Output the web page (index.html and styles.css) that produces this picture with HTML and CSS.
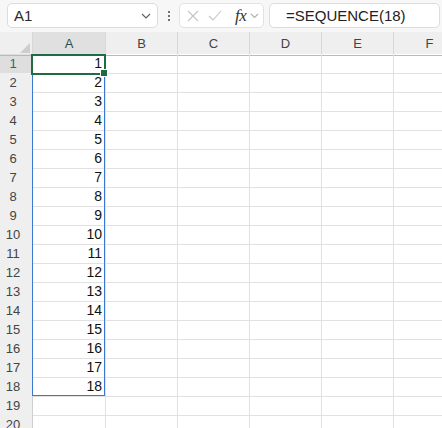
FILE: index.html
```html
<!DOCTYPE html>
<html>
<head>
<meta charset="utf-8">
<link rel="stylesheet" href="styles.css">
</head>
<body>
<div class="toolbar">
  <div class="namebox">
    <span class="nb-text">A1</span>
    <svg class="chev" width="10" height="6" viewBox="0 0 10 6"><polyline points="1,1 5,5 9,1" fill="none" stroke="#6a5a6a" stroke-width="1.2"/></svg>
  </div>
  <div class="dots"><i></i><i></i><i></i></div>
  <div class="fxbox">
    <svg class="ico" width="12" height="12" viewBox="0 0 12 12"><path d="M1 1 L11 11 M11 1 L1 11" stroke="#c4c4c4" stroke-width="1.1" fill="none"/></svg>
    <svg class="ico chk" width="14" height="12" viewBox="0 0 14 12"><polyline points="1,6 5,10 13,1" stroke="#c4c4c4" stroke-width="1.1" fill="none"/></svg>
    <span class="fx">fx</span>
    <svg class="chev2" width="9" height="6" viewBox="0 0 9 6"><polyline points="1,1 4.5,4.5 8,1" fill="none" stroke="#b0b0b0" stroke-width="1.1"/></svg>
  </div>
  <div class="formula">=SEQUENCE(18)</div>
</div>
<div class="sheet">
  <div class="row head">
    <div class="corner"><span class="tri"></span></div>
    <div class="ch sel">A</div><div class="ch">B</div><div class="ch">C</div><div class="ch">D</div><div class="ch">E</div><div class="ch">F</div>
  </div>
  <div class="row"><div class="rh sel">1</div><div class="c num">1</div><div class="c"></div><div class="c"></div><div class="c"></div><div class="c"></div><div class="c"></div></div>
  <div class="row"><div class="rh">2</div><div class="c num">2</div><div class="c"></div><div class="c"></div><div class="c"></div><div class="c"></div><div class="c"></div></div>
  <div class="row"><div class="rh">3</div><div class="c num">3</div><div class="c"></div><div class="c"></div><div class="c"></div><div class="c"></div><div class="c"></div></div>
  <div class="row"><div class="rh">4</div><div class="c num">4</div><div class="c"></div><div class="c"></div><div class="c"></div><div class="c"></div><div class="c"></div></div>
  <div class="row"><div class="rh">5</div><div class="c num">5</div><div class="c"></div><div class="c"></div><div class="c"></div><div class="c"></div><div class="c"></div></div>
  <div class="row"><div class="rh">6</div><div class="c num">6</div><div class="c"></div><div class="c"></div><div class="c"></div><div class="c"></div><div class="c"></div></div>
  <div class="row"><div class="rh">7</div><div class="c num">7</div><div class="c"></div><div class="c"></div><div class="c"></div><div class="c"></div><div class="c"></div></div>
  <div class="row"><div class="rh">8</div><div class="c num">8</div><div class="c"></div><div class="c"></div><div class="c"></div><div class="c"></div><div class="c"></div></div>
  <div class="row"><div class="rh">9</div><div class="c num">9</div><div class="c"></div><div class="c"></div><div class="c"></div><div class="c"></div><div class="c"></div></div>
  <div class="row"><div class="rh">10</div><div class="c num">10</div><div class="c"></div><div class="c"></div><div class="c"></div><div class="c"></div><div class="c"></div></div>
  <div class="row"><div class="rh">11</div><div class="c num">11</div><div class="c"></div><div class="c"></div><div class="c"></div><div class="c"></div><div class="c"></div></div>
  <div class="row"><div class="rh">12</div><div class="c num">12</div><div class="c"></div><div class="c"></div><div class="c"></div><div class="c"></div><div class="c"></div></div>
  <div class="row"><div class="rh">13</div><div class="c num">13</div><div class="c"></div><div class="c"></div><div class="c"></div><div class="c"></div><div class="c"></div></div>
  <div class="row"><div class="rh">14</div><div class="c num">14</div><div class="c"></div><div class="c"></div><div class="c"></div><div class="c"></div><div class="c"></div></div>
  <div class="row"><div class="rh">15</div><div class="c num">15</div><div class="c"></div><div class="c"></div><div class="c"></div><div class="c"></div><div class="c"></div></div>
  <div class="row"><div class="rh">16</div><div class="c num">16</div><div class="c"></div><div class="c"></div><div class="c"></div><div class="c"></div><div class="c"></div></div>
  <div class="row"><div class="rh">17</div><div class="c num">17</div><div class="c"></div><div class="c"></div><div class="c"></div><div class="c"></div><div class="c"></div></div>
  <div class="row"><div class="rh">18</div><div class="c num">18</div><div class="c"></div><div class="c"></div><div class="c"></div><div class="c"></div><div class="c"></div></div>
  <div class="row"><div class="rh">19</div><div class="c"></div><div class="c"></div><div class="c"></div><div class="c"></div><div class="c"></div><div class="c"></div></div>
  <div class="row"><div class="rh">20</div><div class="c"></div><div class="c"></div><div class="c"></div><div class="c"></div><div class="c"></div><div class="c"></div></div>
  <div class="spill"></div>
  <div class="active"><span class="handle"></span></div>
</div>
</body>
</html>
```

FILE: styles.css
```css
html, body {
  margin: 0;
  padding: 0;
  background: #ffffff;
  overflow: hidden;
  width: 442px;
  height: 428px;
  font-family: "Liberation Sans", Arial, sans-serif;
}

.toolbar {
  height: 32px;
  box-sizing: border-box;
  padding: 3px 2px 4px 7px;
  background: #f7f7f7;
  display: flex;
  align-items: stretch;
}

.namebox {
  width: 151px;
  box-sizing: border-box;
  background: #fff;
  border: 1px solid #dcdcdc;
  border-radius: 5px;
  display: flex;
  align-items: center;
  justify-content: space-between;
  padding: 0 6px 0 6px;
}

.nb-text {
  font-size: 15px;
  color: #2b2b2b;
}

.chev {
  margin-top: 1px;
}

.dots {
  width: 21px;
  display: flex;
  flex-direction: column;
  align-items: center;
  justify-content: center;
  gap: 2px;
}

.dots i {
  display: block;
  width: 2px;
  height: 2px;
  border-radius: 1px;
  background: #444;
}

.fxbox {
  width: 85px;
  box-sizing: border-box;
  background: #fff;
  border: 1px solid #e2e2e2;
  border-radius: 5px;
  display: flex;
  align-items: center;
  padding: 0 0 0 7px;
}

.fxbox .chk {
  margin-left: 9px;
}

.fx {
  font-family: "Liberation Serif", "Times New Roman", serif;
  font-style: italic;
  font-size: 17px;
  color: #333;
  margin-left: 13px;
  letter-spacing: -0.5px;
}

.chev2 {
  margin-left: 4px;
}

.formula {
  flex: 1;
  margin-left: 5px;
  box-sizing: border-box;
  background: #fff;
  border: 1px solid #dcdcdc;
  border-radius: 5px;
  padding: 0 0 0 16px;
  display: flex;
  align-items: center;
  font-size: 15px;
  color: #222;
}

.sheet {
  position: relative;
  width: 442px;
  height: 396px;
  overflow: hidden;
}

.row {
  display: grid;
  grid-template-columns: 33px 73px 72px 72px 72px 72px 72px;
  height: 19px;
}

.row > div {
  box-sizing: border-box;
  border-right: 1px solid #e1e1e1;
  border-bottom: 1px solid #e1e1e1;
}

.row.head {
  height: 22px;
  background: #efefef;
}

.row.head > div {
  border-bottom: 1px solid #b9b9b9;
  border-right: 1px solid #d8d8d8;
}

.corner {
  position: relative;
}

.tri {
  position: absolute;
  right: 2px;
  bottom: 2px;
  width: 0;
  height: 0;
  border-left: 10px solid transparent;
  border-bottom: 10px solid #cdcdcd;
}

.ch {
  font-size: 13px;
  color: #444;
  text-align: center;
  line-height: 23px;
}

.ch.sel {
  background: #e0e0e0;
  color: #2f4f3f;
}

.row > .rh {
  background: #efefef;
  border-right: 1px solid #cfcfcf;
  border-bottom: 1px solid #dcdcdc;
  font-size: 13px;
  color: #444;
  text-align: center;
  padding-right: 6px;
  line-height: 19px;
}

.row > .rh.sel {
  background: #dedede;
  color: #1d6f6a;
}

.c {
  font-size: 14px;
  color: #111;
  line-height: 19px;
}

.c.num {
  text-align: right;
  padding-right: 3px;
}

.spill {
  position: absolute;
  left: 32px;
  top: 22px;
  width: 73px;
  height: 342px;
  box-sizing: border-box;
  border: 1px solid #3b78d2;
  pointer-events: none;
}

.active {
  position: absolute;
  left: 31px;
  top: 22px;
  width: 75px;
  height: 21px;
  box-sizing: border-box;
  border: 2px solid #1f6b43;
}

.handle {
  position: absolute;
  right: -4px;
  bottom: -4px;
  width: 6px;
  height: 6px;
  background: #1f6b43;
  border: 1px solid #fff;
}
```
